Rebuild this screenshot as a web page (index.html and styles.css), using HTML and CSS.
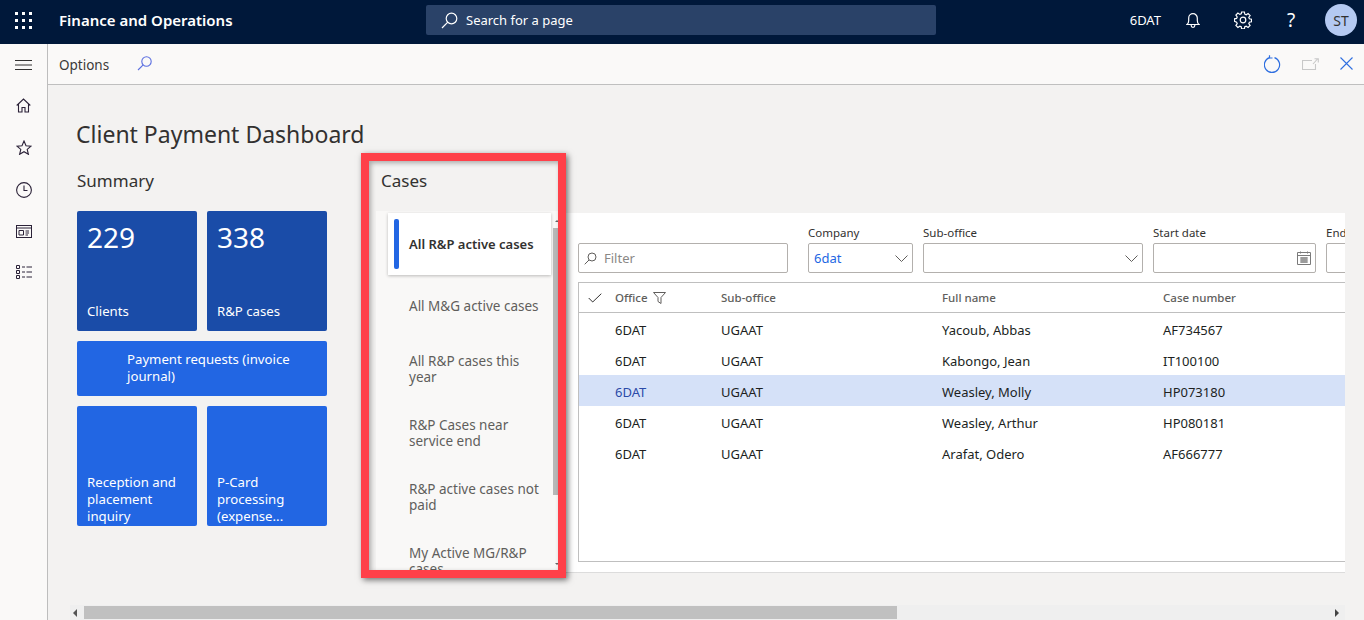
FILE: index.html
```html
<!DOCTYPE html>
<html lang="en">
<head>
    <meta charset="UTF-8">
    <title>Client Payment Dashboard</title>
    <link rel="stylesheet" href="styles.css">
</head>
<body>
    <header class="topbar">
        <svg class="waffle" width="17" height="17" viewBox="0 0 17 17" fill="#fff">
            <rect x="0" y="0" width="3" height="3"/><rect x="7" y="0" width="3" height="3"/><rect x="14" y="0" width="3" height="3"/>
            <rect x="0" y="7" width="3" height="3"/><rect x="7" y="7" width="3" height="3"/><rect x="14" y="7" width="3" height="3"/>
            <rect x="0" y="14" width="3" height="3"/><rect x="7" y="14" width="3" height="3"/><rect x="14" y="14" width="3" height="3"/>
        </svg>
        <div class="app-name">Finance and Operations</div>
        <div class="search-box">
            <svg width="17" height="17" viewBox="0 0 17 17" fill="none" stroke="#fff" stroke-width="1.2">
                <circle cx="10.5" cy="6.5" r="5.3"/><path d="M6.8 10.2 1 16"/>
            </svg>
            <span>Search for a page</span>
        </div>
        <div class="top-right">
            <span class="company">6DAT</span>
            <svg class="bell" width="14" height="16" viewBox="0 0 14 16" fill="none" stroke="#fff" stroke-width="1.2">
                <path d="M1 12.5c1.2-1 1.7-2 1.7-4V6a4.3 4.3 0 0 1 8.6 0v2.5c0 2 .5 3 1.7 4z"/><path d="M5.2 13v.6a1.8 1.8 0 0 0 3.6 0V13"/>
            </svg>
            <svg class="gear" width="18" height="18" viewBox="0 0 18 18" fill="none" stroke="#fff" stroke-width="1.2">
                <circle cx="9" cy="9" r="2.8"/>
                <path d="M7.6 1h2.8l.4 2.2 1.4.6 1.9-1.3 2 2-1.3 1.9.6 1.4 2.1.4v2.6l-2.1.4-.6 1.4 1.3 1.9-2 2-1.9-1.3-1.4.6-.4 2.1H7.6l-.4-2.1-1.4-.6-1.9 1.3-2-2 1.3-1.9-.6-1.4L.5 10.400V7.800l2.100-.4.6-1.400-1.300-1.900 2-2 1.900 1.300 1.400-.6z"/>
            </svg>
            <span class="help">?</span>
            <span class="avatar">ST</span>
        </div>
    </header>

    <div class="main">
        <nav class="sidenav">
            <svg width="17" height="10" viewBox="0 0 17 10" stroke="#323130" stroke-width="1"><path d="M0 .5h17M0 5h17M0 9.500h17"/></svg>
            <svg width="15" height="15" viewBox="0 0 15 15" fill="none" stroke="#2b2238" stroke-width="1.1"><path d="M.7 7.500 7.500 1l6.800 6.500M2.500 6v8h3.500V9.500h3V14h3.500V6"/></svg>
            <svg width="16" height="15" viewBox="0 0 16 15" fill="none" stroke="#2b2238" stroke-width="1.1"><path d="m8 1 2 4.700 5 .4-3.800 3.300 1.200 4.900L8 11.700l-4.400 2.600 1.200-4.900L1 6.100l5-.4z"/></svg>
            <svg width="16" height="16" viewBox="0 0 16 16" fill="none" stroke="#2b2238" stroke-width="1.1"><circle cx="8" cy="8" r="7.400"/><path d="M8 3.500V8.500H11.500"/></svg>
            <svg width="16" height="13" viewBox="0 0 16 13" fill="none" stroke="#2b2238" stroke-width="1"><rect x=".5" y=".5" width="15" height="12"/><path d="M.5 3h15M3 5.500h4.500v4.500H3zM9.500 6H13M9.500 8H13M9.500 10H12"/></svg>
            <svg width="16" height="14" viewBox="0 0 16 14" fill="none" stroke="#2b2238" stroke-width="1"><path d="M.5.500h3v3h-3zM.5 5.500h3v3h-3zM.5 10.500h3v3h-3zM6 2h3M10.500 2H16M6 7h3M10.500 7H16M6 12h3M10.500 12H16"/></svg>
        </nav>

        <div class="workspace">
            <div class="actionbar">
                <span class="options">Options</span>
                <svg class="options-search" width="15" height="15" viewBox="0 0 15 15" fill="none" stroke="#5b6fe0" stroke-width="1.100">
                    <circle cx="9.500" cy="5.500" r="4.700"/><path d="M6.200 8.800 1 14"/>
                </svg>
                <div class="action-icons">
                    <svg width="17" height="18" viewBox="0 0 17 18" fill="none" stroke="#2f6fe0" stroke-width="1.200"><path d="M5.500 2.600a7.600 7.600 0 1 0 5 0"/><path d="M5.500 .3V3H8.500"/></svg>
                    <svg width="17" height="12" viewBox="0 0 17 12" fill="none" stroke="#c8c8c8" stroke-width="1.100"><path d="M10 2.500H.5v9h13V6M11 6l4.500-5M12.500 .7h3.800v3.800"/></svg>
                    <svg width="13" height="13" viewBox="0 0 13 13" fill="none" stroke="#2f6fe0" stroke-width="1.100"><path d="m.5.500 12 12M12.500.5l-12 12"/></svg>
                </div>
            </div>

            <div class="content">
                <h1>Client Payment Dashboard</h1>
                <div class="columns">
                    <section class="summary">
                        <h2>Summary</h2>
                        <div class="tiles">
                            <div class="tile tile-dark">
                                <div class="tile-num">229</div>
                                <div class="tile-label">Clients</div>
                            </div>
                            <div class="tile tile-dark">
                                <div class="tile-num">338</div>
                                <div class="tile-label">R&amp;P cases</div>
                            </div>
                            <div class="tile tile-wide">Payment requests (invoice journal)</div>
                            <div class="tile">
                                <div class="tile-label">Reception and placement inquiry</div>
                            </div>
                            <div class="tile">
                                <div class="tile-label">P-Card processing (expense...</div>
                            </div>
                        </div>
                    </section>

                    <section class="cases">
                        <h2>Cases</h2>
                        <div class="cases-body">
                            <div class="case-list">
                                <div class="case-item active">All R&amp;P active cases</div>
                                <div class="case-item">All M&amp;G active cases</div>
                                <div class="case-item">All R&amp;P cases this year</div>
                                <div class="case-item">R&amp;P Cases near service end</div>
                                <div class="case-item">R&amp;P active cases not paid</div>
                                <div class="case-item">My Active MG/R&amp;P cases</div>
                                <div class="list-scroll"><div class="list-thumb"></div></div>
                            </div>
                            <div class="case-panel">
                                <div class="filters">
                                    <div class="field field-filter">
                                        <div class="input">
                                            <svg width="13" height="13" viewBox="0 0 13 13" fill="none" stroke="#605e5c"><circle cx="8" cy="5" r="4"/><path d="M5 8 .7 12.300"/></svg>
                                            <span class="placeholder">Filter</span>
                                        </div>
                                    </div>
                                    <div class="field field-company">
                                        <label>Company</label>
                                        <div class="input">
                                            <span class="link-value">6dat</span>
                                            <svg class="chevron" width="13" height="7" viewBox="0 0 13 7" fill="none" stroke="#605e5c"><path d="m.5.500 6 6 6-6"/></svg>
                                        </div>
                                    </div>
                                    <div class="field field-sub">
                                        <label>Sub-office</label>
                                        <div class="input">
                                            <svg class="chevron" width="13" height="7" viewBox="0 0 13 7" fill="none" stroke="#605e5c"><path d="m.5.500 6 6 6-6"/></svg>
                                        </div>
                                    </div>
                                    <div class="field field-date">
                                        <label>Start date</label>
                                        <div class="input">
                                            <svg class="chevron" width="14" height="14" viewBox="0 0 14 14" fill="none" stroke="#7a7a7a"><path d="M.5 1.500h13v12H.5zM.5 4.500h13M3.500.5v2M10.500.5v2M3 7h8M3 9h8M3 11h8M5 6v6M7 6v6M9 6v6"/></svg>
                                        </div>
                                    </div>
                                    <div class="field field-end">
                                        <label>End date</label>
                                        <div class="input"></div>
                                    </div>
                                </div>
                                <div class="grid">
                                    <div class="row row-head">
                                        <div class="cell-check">
                                            <svg width="14" height="10" viewBox="0 0 14 10" fill="none" stroke="#323130"><path d="m.7 5 4 4L13.300.7"/></svg>
                                        </div>
                                        <div class="cell-office">Office
                                            <svg class="funnel" width="13" height="12" viewBox="0 0 13 12" fill="none" stroke="#605e5c"><path d="M.5.500h12L8 5.500v6l-3-2V5.500z"/></svg>
                                        </div>
                                        <div class="cell-sub">Sub-office</div>
                                        <div class="cell-name">Full name</div>
                                        <div class="cell-case">Case number</div>
                                    </div>
                                    <div class="row">
                                        <div class="cell-check"></div><div class="cell-office">6DAT</div><div class="cell-sub">UGAAT</div><div class="cell-name">Yacoub, Abbas</div><div class="cell-case">AF734567</div>
                                    </div>
                                    <div class="row">
                                        <div class="cell-check"></div><div class="cell-office">6DAT</div><div class="cell-sub">UGAAT</div><div class="cell-name">Kabongo, Jean</div><div class="cell-case">IT100100</div>
                                    </div>
                                    <div class="row selected">
                                        <div class="cell-check"></div><div class="cell-office">6DAT</div><div class="cell-sub">UGAAT</div><div class="cell-name">Weasley, Molly</div><div class="cell-case">HP073180</div>
                                    </div>
                                    <div class="row">
                                        <div class="cell-check"></div><div class="cell-office">6DAT</div><div class="cell-sub">UGAAT</div><div class="cell-name">Weasley, Arthur</div><div class="cell-case">HP080181</div>
                                    </div>
                                    <div class="row">
                                        <div class="cell-check"></div><div class="cell-office">6DAT</div><div class="cell-sub">UGAAT</div><div class="cell-name">Arafat, Odero</div><div class="cell-case">AF666777</div>
                                    </div>
                                </div>
                            </div>
                        </div>
                    </section>
                </div>
                <div class="hscroll">
                    <span class="arrow-left"></span>
                    <div class="hscroll-track"><div class="hscroll-thumb"></div></div>
                    <span class="arrow-right"></span>
                </div>
            </div>
        </div>
    </div>

    <div class="annotation"></div>
</body>
</html>
```

FILE: styles.css
```css
* {
    box-sizing: border-box;
}

html, body {
    height: 100%;
}

body {
    margin: 0;
    font-family: "Noto Sans", "Open Sans", sans-serif;
    font-size: 13px;
    color: #201f1e;
    background-color: #f3f2f1;
    overflow: hidden;
}

.topbar {
    display: flex;
    align-items: center;
    height: 44px;
    padding: 0 0 4px 15px;
    background-color: #00183a;
    color: #fff;
}

.app-name {
    margin-left: 27px;
    font-size: 15px;
    font-weight: 600;
    width: 367px;
}

.search-box {
    display: flex;
    align-items: center;
    gap: 8px;
    width: 510px;
    height: 30px;
    padding-left: 15px;
    background-color: #2a4268;
    border-radius: 2px;
}

.top-right {
    display: flex;
    align-items: center;
    margin-left: auto;
    padding-right: 7px;
}

.company {
    margin-right: 25px;
}

.bell {
    margin-right: 34px;
}

.gear {
    margin-right: 35px;
}

.help {
    margin-right: 27px;
    font-size: 19px;
    width: 11px;
}

.avatar {
    display: flex;
    align-items: center;
    justify-content: center;
    width: 32px;
    height: 32px;
    border-radius: 50%;
    background-color: #b4c9f2;
    color: #323130;
    font-size: 14px;
}

.main {
    display: flex;
    height: 576px;
}

.sidenav {
    display: flex;
    flex-direction: column;
    align-items: center;
    flex-shrink: 0;
    width: 48px;
    padding-top: 16px;
    background-color: #faf9f8;
    border-right: 1px solid #bdbdbd;
}

.sidenav svg {
    margin-bottom: 27px;
}

.sidenav svg:first-child {
    margin-bottom: 28px;
}

.workspace {
    flex: 1;
    min-width: 0;
    display: flex;
    flex-direction: column;
}

.actionbar {
    display: flex;
    align-items: center;
    height: 41px;
    padding: 1px 11px 0 11px;
    background-color: #faf9f8;
    border-bottom: 1px solid #bfbfbf;
}

.options {
    font-size: 13.5px;
    color: #3b3a39;
}

.options-search {
    margin-left: 28px;
    margin-top: -3px;
}

.action-icons {
    display: flex;
    align-items: center;
    gap: 21px;
    margin-left: auto;
    margin-top: -2px;
}

.content {
    position: relative;
    flex: 1;
    padding: 33px 0 0 28px;
    overflow: hidden;
}

h1 {
    margin: 0 0 19px;
    font-size: 23px;
    font-weight: 400;
    line-height: 32px;
    color: #323130;
}

h2 {
    margin: 0 0 18px;
    font-size: 17px;
    font-weight: 400;
    line-height: 24px;
    color: #323130;
}

.columns {
    display: flex;
}

.summary {
    flex-shrink: 0;
    width: 250px;
    margin-left: 1px;
    margin-right: 49px;
}

.tiles {
    display: grid;
    grid-template-columns: 120px 120px;
    gap: 10px;
}

.tile {
    display: flex;
    flex-direction: column;
    justify-content: flex-end;
    height: 120px;
    padding: 0 10px 1px;
    background-color: #2266e3;
    border-radius: 2px;
    color: #fff;
    font-size: 13.2px;
    line-height: 17px;
}

.tile-dark {
    justify-content: space-between;
    padding-bottom: 11px;
    background-color: #1a4ca8;
}

.tile-num {
    font-size: 28px;
    line-height: 40px;
    padding-top: 6px;
}

.tile-wide {
    grid-column: span 2;
    display: block;
    height: 55px;
    padding: 10px 30px 0 50px;
}

.cases {
    flex: 1;
    min-width: 0;
    margin-right: 19px;
}

.cases h2 {
    margin-left: 5px;
}

.cases-body {
    display: flex;
    height: 362px;
}

.case-list {
    position: relative;
    flex-shrink: 0;
    width: 183px;
    height: 361px;
    padding: 2px 0 0 12px;
    background-color: #f9f8f7;
    overflow: hidden;
}

.case-item {
    display: flex;
    align-items: center;
    position: relative;
    width: 163px;
    min-height: 62px;
    padding: 16px 8px 16px 21px;
    font-size: 13.5px;
    line-height: 16px;
    color: #605e5c;
}

.case-item.active {
    background-color: #fff;
    box-shadow: 0 1px 3px rgba(0, 0, 0, 0.25);
    color: #323130;
    font-size: 13px;
    font-weight: 600;
}

.case-item.active::before {
    content: "";
    position: absolute;
    left: 6px;
    top: 6px;
    bottom: 6px;
    width: 5px;
    border-radius: 2px;
    background-color: #2266e3;
}

.list-scroll {
    position: absolute;
    left: 177px;
    top: 0;
    bottom: 0;
    width: 6px;
}

.list-scroll::before,
.list-scroll::after {
    content: "";
    position: absolute;
    right: 0;
    border-left: 2px solid transparent;
    border-right: 2px solid transparent;
}

.list-scroll::before {
    top: 9px;
    border-bottom: 2px solid #666;
}

.list-scroll::after {
    bottom: 7px;
    border-top: 2px solid #666;
}

.list-thumb {
    margin-top: 17px;
    height: 267px;
    background-color: #b8b8b8;
}

.case-panel {
    flex: 1;
    min-width: 0;
    margin-top: 2px;
    padding: 0 0 10px 19px;
    display: flex;
    flex-direction: column;
    background-color: #fff;
    border-bottom: 1px solid #dcdcdc;
    overflow: hidden;
}

.filters {
    display: flex;
    gap: 10px;
    flex-shrink: 0;
    height: 69px;
    padding-top: 12px;
}

.field {
    flex-shrink: 0;
}

.field label {
    display: block;
    height: 18px;
    line-height: 15px;
    font-size: 11.5px;
    color: #323130;
}

.input {
    display: flex;
    align-items: center;
    height: 30px;
    padding: 0 5px;
    background-color: #fff;
    border: 1px solid #b3b0ad;
    border-radius: 2px;
}

.field-filter {
    width: 210px;
    margin-right: 10px;
    padding-top: 18px;
}

.placeholder {
    margin-left: 7px;
    color: #8a8886;
}

.field-company {
    width: 105px;
}

.field-sub {
    width: 220px;
}

.field-date {
    width: 163px;
}

.field-end {
    width: 100px;
}

.link-value {
    color: #2266e3;
}

.chevron {
    margin-left: auto;
    margin-right: -1px;
}

.grid {
    flex: 1;
    border: 1px solid #bfbfbf;
    border-right: none;
}

.row {
    display: flex;
    align-items: center;
    height: 31px;
    padding-top: 2px;
}

.row-head {
    height: 30px;
    padding-top: 0;
    border-bottom: 1px solid #bfbfbf;
    font-size: 11.5px;
    color: #605e5c;
    font-weight: 500;
}

.row.selected {
    background-color: #d5e1f8;
}

.row.selected .cell-office {
    color: #2b4aa8;
}

.cell-check {
    display: flex;
    align-items: center;
    width: 36px;
    padding-left: 9px;
}

.cell-office {
    display: flex;
    align-items: center;
    gap: 5px;
    width: 106px;
}

.cell-sub {
    width: 221px;
}

.cell-name {
    width: 221px;
}

.hscroll {
    position: absolute;
    left: 22px;
    right: 19px;
    bottom: 0;
    display: flex;
    align-items: center;
    height: 15px;
    padding: 0 6px 0 3px;
    background-color: #efefef;
}

.hscroll-track {
    flex: 1;
    margin-left: 7px;
}

.hscroll-thumb {
    width: 813px;
    height: 13px;
    background-color: #c0c0c0;
}

.arrow-left {
    border: 4px solid transparent;
    border-right: 4px solid #555;
    border-left: none;
}

.arrow-right {
    border: 4px solid transparent;
    border-left: 4px solid #444;
    border-right: none;
}

/* red box drawn on top of the screenshot */
.annotation {
    position: absolute;
    left: 361px;
    top: 153px;
    width: 205px;
    height: 425px;
    border: 8px solid #ff4049;
    box-shadow: 2px 2px 6px rgba(0, 0, 0, 0.55), inset 2px 2px 5px rgba(0, 0, 0, 0.3);
}
```
